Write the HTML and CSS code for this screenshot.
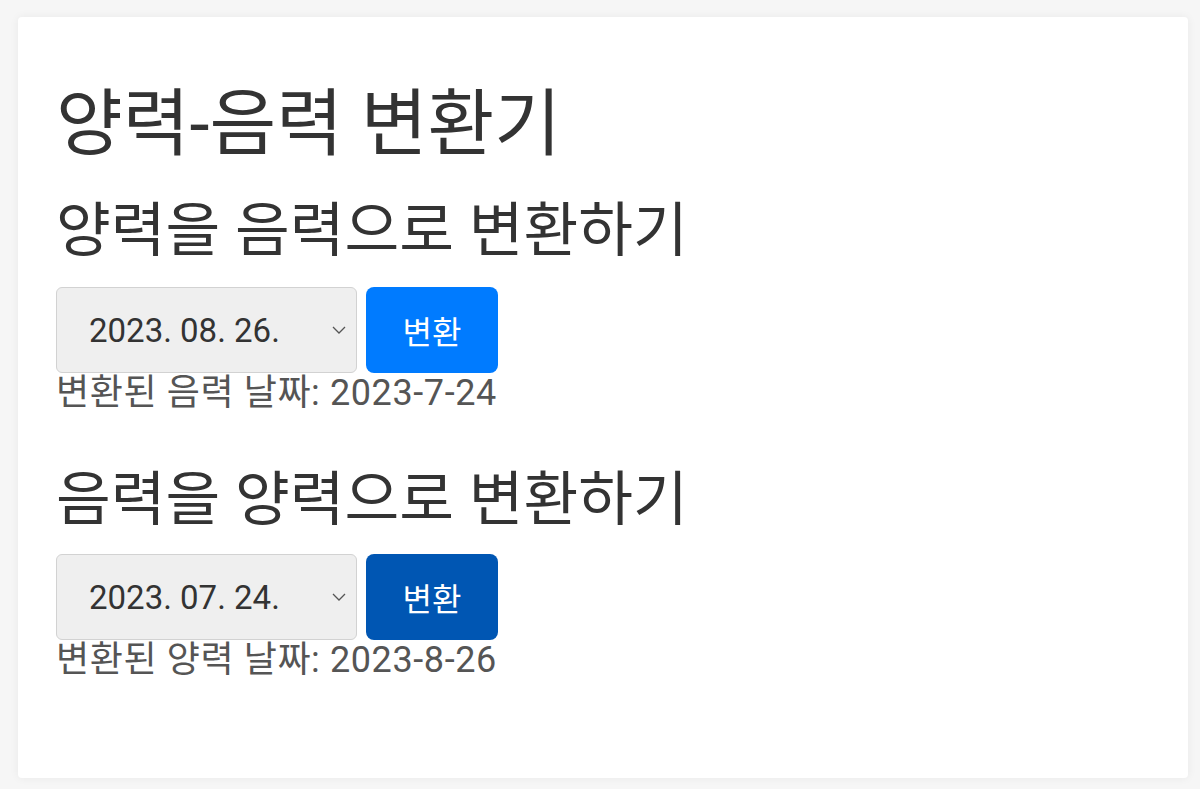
FILE: index.html
```html
<!DOCTYPE html>
<html lang="ko">
<head>
<meta charset="utf-8">
<title>양력-음력 변환기</title>
<link rel="stylesheet" href="styles.css">
</head>
<body>
<main class="card">
  <h1 class="title">양력-음력 변환기</h1>
  <section class="block">
    <h2 class="subtitle">양력을 음력으로 변환하기</h2>
    <div class="row">
      <div class="date">
        <span class="date-text">2023. 08. 26.</span>
        <svg class="chev" width="14" height="8" viewBox="0 0 14 8"><path d="M1 1 L7 7 L13 1" fill="none" stroke="#555" stroke-width="1.3"/></svg>
      </div>
      <button class="btn">변환</button>
    </div>
    <p class="result">변환된 음력 날짜: 2023-7-24</p>
  </section>
  <section class="block block2">
    <h2 class="subtitle">음력을 양력으로 변환하기</h2>
    <div class="row">
      <div class="date">
        <span class="date-text">2023. 07. 24.</span>
        <svg class="chev" width="14" height="8" viewBox="0 0 14 8"><path d="M1 1 L7 7 L13 1" fill="none" stroke="#555" stroke-width="1.3"/></svg>
      </div>
      <button class="btn btn-active">변환</button>
    </div>
    <p class="result">변환된 양력 날짜: 2023-8-26</p>
  </section>
</main>
</body>
</html>
```
FILE: styles.css
```css
html, body {
  margin: 0;
  padding: 0;
}
body {
  background: #f6f6f6;
  font-family: "Roboto", "Noto Sans CJK KR", sans-serif;
  color: #333;
  padding: 17px 12px 11px 18px;
}
.card {
  background: #fff;
  border-radius: 4px;
  box-shadow: 0 0 10px rgba(0,0,0,0.06);
  height: 761px;
  box-sizing: border-box;
  padding: 64px 38px 0 38px;
}
.title {
  margin: 0 0 27px 0;
  font-size: 72.5px;
  font-weight: 400;
  line-height: 87px;
  color: #333;
}
.subtitle {
  margin: 0 0 20px 0;
  font-size: 59.5px;
  font-weight: 400;
  line-height: 72px;
  color: #333;
}
.block2 {
  margin-top: 51px;
}
.block2 .subtitle {
  margin-bottom: 18px;
}
.row {
  display: flex;
  gap: 9px;
}
.date {
  width: 301px;
  height: 86px;
  box-sizing: border-box;
  background: #efefef;
  border: 1px solid #d2d2d2;
  border-radius: 6px;
  display: flex;
  align-items: center;
  justify-content: space-between;
  padding: 0 10px 0 32px;
  font-size: 33px;
  color: #333;
}
.btn {
  width: 132px;
  height: 86px;
  border: none;
  border-radius: 8px;
  background: #007bff;
  color: #fff;
  font-family: "Roboto", "Noto Sans CJK KR", sans-serif;
  font-size: 32px;
  padding: 0;
}
.btn-active {
  background: #0056b3;
}
.result {
  margin: 0;
  font-size: 36px;
  line-height: 40px;
  letter-spacing: 0.6px;
  color: #555;
}
```
